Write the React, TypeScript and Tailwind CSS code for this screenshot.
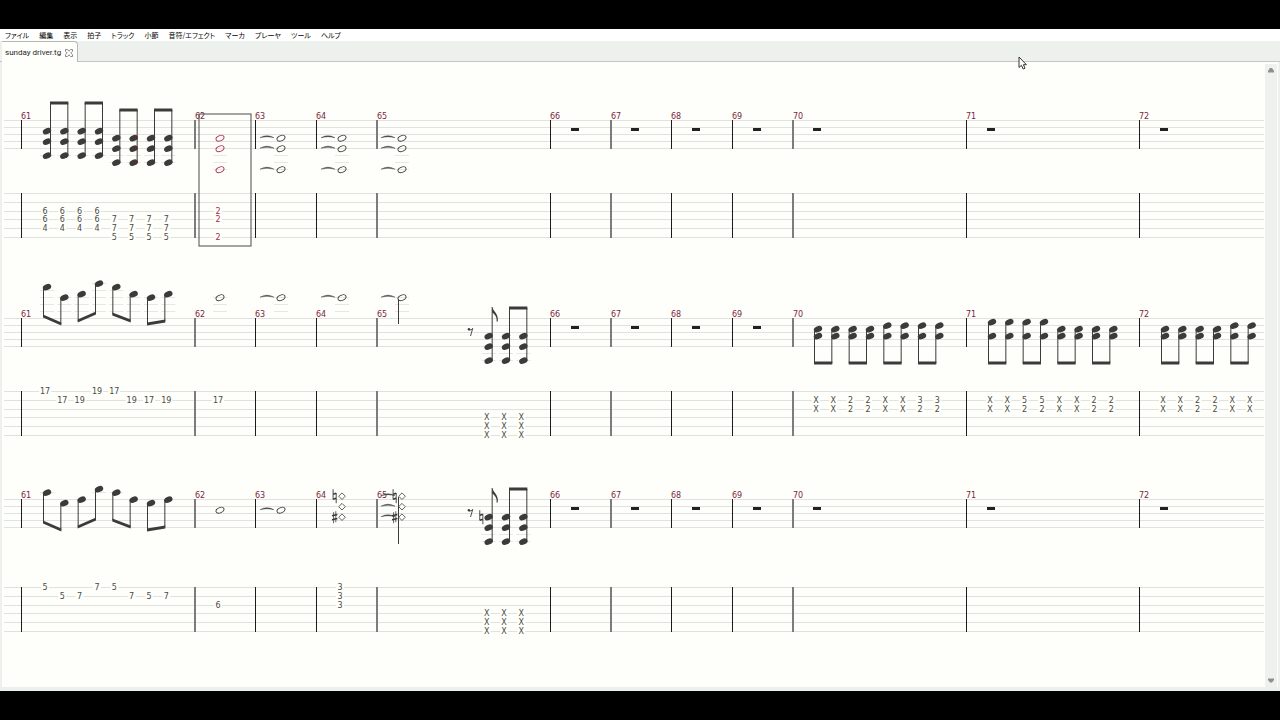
import React from 'react';

type HeadKind = 'filled' | 'open' | 'diamond';
type Accidental = 'natural' | 'sharp';

type Beat = {
  slot: number;
  steps: number[]; // half line steps counted down from the top staff line
  frets?: [number, string][];
  kind?: HeadKind;
  tied?: boolean;
  accidentals?: Record<number, Accidental>;
  color?: string;
  playing?: boolean;
  stem?: [number, number, 'up' | 'down'];
};

type Beam = { slots: [number, number]; y: [number, number]; dir: 'up' | 'down' };

type Measure = {
  beats?: Beat[];
  beams?: Beam[];
  flag?: [number, number];
  eighthRest?: number;
};

type TrackData = { name: string; height: number; tabTop: number; measures: Record<number, Measure> };

const MENU_ITEMS = [
  'ファイル',
  '編集',
  '表示',
  '拍子',
  'トラック',
  '小節',
  '音符/エフェクト',
  'マーカ',
  'プレーヤ',
  'ツール',
  'ヘルプ',
];

const BARS = [
  { number: 61, x: 17, w: 1 },
  { number: 62, x: 190, w: 2 },
  { number: 63, x: 251, w: 1 },
  { number: 64, x: 312, w: 1 },
  { number: 65, x: 372, w: 2 },
  { number: 66, x: 546, w: 1 },
  { number: 67, x: 606, w: 2 },
  { number: 68, x: 667, w: 1 },
  { number: 69, x: 728, w: 1 },
  { number: 70, x: 788, w: 2 },
  { number: 71, x: 962, w: 1 },
  { number: 72, x: 1135, w: 1 },
];

const STAFF_TOP = 57;
const INK = '#3b3b39';
const RED = '#ab2850';
const LINE = '#dfe2de';
const PAPER = '#fefefb';

const slotX = (slot: number) => 26 + (slot * 52) / 3;
const stepY = (step: number) => STAFF_TOP + 1 + step * 3.5;
const stemX = (slot: number, dir: 'up' | 'down') => slotX(slot) + (dir === 'up' ? 3.5 : -3.5);

const filledBeats = (steps: number[][], frets: [number, string][][], start = 0): Beat[] =>
  steps.map((s, i) => ({ slot: i + start, steps: s, frets: frets[i] }));

const high: number[] = [3, 6, 10];
const low: number[] = [5, 8, 12];

const deadChord: [number, string][] = [
  [3, 'X'],
  [4, 'X'],
  [5, 'X'],
];

const pairBeams = (count: number): Beam[] =>
  Array.from({ length: count }, (_, i) => ({ slots: [i * 2, i * 2 + 1], y: [102, 102], dir: 'down' }));

const strum = (tops: number[], frets: string[]): Measure => ({
  beats: tops.map((top, i) => ({
    slot: i,
    steps: [top, 5],
    frets: [
      [1, frets[i]],
      [2, frets[i] === 'X' ? 'X' : '2'],
    ],
  })),
  beams: pairBeams(Math.ceil(tops.length / 2)),
});

const single = (string: number, fret: string): [number, string][] => [[string, fret]];

const TRACKS: TrackData[] = [
  {
    name: 'Track 1',
    height: 198,
    tabTop: 130,
    measures: {
      61: {
        beats: [0, 1, 2, 3, 4, 5, 6, 7].map((slot) => ({
          slot,
          steps: slot < 4 ? high : low,
          playing: slot === 5,
          frets: (slot < 4
            ? [
                [2, '6'],
                [3, '6'],
                [4, '4'],
              ]
            : [
                [3, '7'],
                [4, '7'],
                [5, '5'],
              ]) as [number, string][],
        })),
        beams: [
          { slots: [0, 1], y: [40, 40], dir: 'up' },
          { slots: [2, 3], y: [40, 40], dir: 'up' },
          { slots: [4, 5], y: [47, 47], dir: 'up' },
          { slots: [6, 7], y: [47, 47], dir: 'up' },
        ],
      },
      62: {
        beats: [
          {
            slot: 0,
            steps: [5, 8, 14],
            kind: 'open',
            color: RED,
            frets: [
              [2, '2'],
              [3, '2'],
              [5, '2'],
            ],
          },
        ],
      },
      63: { beats: [{ slot: 0, steps: [5, 8, 14], kind: 'open', tied: true }] },
      64: { beats: [{ slot: 0, steps: [5, 8, 14], kind: 'open', tied: true }] },
      65: { beats: [{ slot: 0, steps: [5, 8, 14], kind: 'open', tied: true }] },
    },
  },
  {
    name: 'Track 2',
    height: 181,
    tabTop: 130,
    measures: {
      61: {
        beats: filledBeats(
          [[-9], [-6], [-7], [-10], [-9], [-7], [-6], [-7]],
          [
            single(0, '17'),
            single(1, '17'),
            single(1, '19'),
            single(0, '19'),
            single(0, '17'),
            single(1, '19'),
            single(1, '17'),
            single(1, '19'),
          ]
        ),
        beams: [
          { slots: [0, 1], y: [55, 63], dir: 'down' },
          { slots: [2, 3], y: [60, 52], dir: 'down' },
          { slots: [4, 5], y: [53, 60], dir: 'down' },
          { slots: [6, 7], y: [63, 60], dir: 'down' },
        ],
      },
      62: { beats: [{ slot: 0, steps: [-6], kind: 'open', frets: single(1, '17') }] },
      63: { beats: [{ slot: 0, steps: [-6], kind: 'open', tied: true }] },
      64: { beats: [{ slot: 0, steps: [-6], kind: 'open', tied: true }] },
      65: {
        beats: [
          { slot: 0, steps: [-6], kind: 'open', tied: true, stem: [38, 63, 'down'] },
          ...filledBeats([low, low, low], [deadChord, deadChord, deadChord], 5),
        ],
        eighthRest: 4,
        flag: [5, 46],
        beams: [{ slots: [6, 7], y: [47, 47], dir: 'up' }],
      },
      70: strum([3, 3, 3, 3, 2, 2, 2, 2], ['X', 'X', '2', '2', 'X', 'X', '3', '3']),
      71: strum([1, 1, 1, 1, 3, 3, 3, 3], ['X', 'X', '5', '5', 'X', 'X', '2', '2']),
      72: strum([3, 3, 3, 3, 2, 2], ['X', 'X', '2', '2', 'X', 'X']),
    },
  },
  {
    name: 'Track 3',
    height: 202,
    tabTop: 145,
    measures: {
      61: {
        beats: filledBeats(
          [[-2], [1], [0], [-3], [-2], [0], [1], [0]],
          [
            single(0, '5'),
            single(1, '5'),
            single(1, '7'),
            single(0, '7'),
            single(0, '5'),
            single(1, '7'),
            single(1, '5'),
            single(1, '7'),
          ]
        ),
        beams: [
          { slots: [0, 1], y: [80, 88], dir: 'down' },
          { slots: [2, 3], y: [85, 77], dir: 'down' },
          { slots: [4, 5], y: [78, 85], dir: 'down' },
          { slots: [6, 7], y: [88, 85], dir: 'down' },
        ],
      },
      62: { beats: [{ slot: 0, steps: [3], kind: 'open', frets: single(2, '6') }] },
      63: { beats: [{ slot: 0, steps: [3], kind: 'open', tied: true }] },
      64: {
        beats: [
          {
            slot: 0,
            steps: [-1, 2, 5],
            kind: 'diamond',
            accidentals: { [-1]: 'natural', 5: 'sharp' },
            frets: [
              [0, '3'],
              [1, '3'],
              [2, '3'],
            ],
          },
        ],
      },
      65: {
        beats: [
          {
            slot: 0,
            steps: [-1, 2, 5],
            kind: 'diamond',
            tied: true,
            accidentals: { [-1]: 'natural', 5: 'sharp' },
            stem: [55, 102, 'down'],
          },
          { slot: 5, steps: low, frets: deadChord, accidentals: { 5: 'natural' } },
          ...filledBeats([low, low], [deadChord, deadChord], 6),
        ],
        eighthRest: 4,
        flag: [5, 46],
        beams: [{ slots: [6, 7], y: [47, 47], dir: 'up' }],
      },
    },
  },
];

const tabLineY = (tabTop: number, i: number) => tabTop + Math.round(i * 8.75);

const ledgerSteps = (steps: number[]) => {
  const result: number[] = [];
  for (let s = 10; s <= Math.max(...steps); s += 2) result.push(s);
  for (let s = -2; s >= Math.min(...steps); s -= 2) result.push(s);
  return result;
};

const NoteHead = ({ x, y, kind, color }: { x: number; y: number; kind: HeadKind; color: string }) => {
  if (kind === 'diamond') {
    return (
      <path d={`M${x - 3.3} ${y}L${x} ${y - 3.3}L${x + 3.3} ${y}L${x} ${y + 3.3}Z`} fill={PAPER} stroke={color} strokeWidth="0.8" />
    );
  }
  const open = kind === 'open';
  return (
    <ellipse
      cx={x}
      cy={y}
      rx={open ? 4.2 : 4.4}
      ry={open ? 2.6 : 2.9}
      transform={`rotate(-24 ${x} ${y})`}
      fill={open ? 'none' : color}
      stroke={open ? color : 'none'}
      strokeWidth="0.9"
    />
  );
};

const AccidentalSign = ({ x, y, type }: { x: number; y: number; type: Accidental }) =>
  type === 'natural' ? (
    <g stroke={INK} fill="none">
      <path d={`M${x - 1.5} ${y - 7}V${y + 3.2}M${x + 1.6} ${y - 3.2}V${y + 7}`} strokeWidth="0.9" />
      <path d={`M${x - 1.5} ${y - 2}L${x + 1.6} ${y - 3}M${x - 1.5} ${y + 3}L${x + 1.6} ${y + 2}`} strokeWidth="1.6" />
    </g>
  ) : (
    <g stroke={INK} fill="none">
      <path d={`M${x - 1} ${y - 5}V${y + 6}M${x + 1.2} ${y - 6}V${y + 5}`} strokeWidth="0.8" />
      <path d={`M${x - 2.6} ${y - 1.4}L${x + 2.8} ${y - 2.6}M${x - 2.6} ${y + 2.6}L${x + 2.8} ${y + 1.4}`} strokeWidth="1.5" />
    </g>
  );

const BeatView = ({ beat, tabTop }: { beat: Beat; tabTop: number }) => {
  const x = slotX(beat.slot);
  const color = beat.color ?? INK;
  return (
    <g>
      {ledgerSteps(beat.steps).map((s) => (
        <rect key={s} x={x - 7} y={Math.floor(stepY(s) - 1)} width="14" height="1" fill="#e6e8e4" />
      ))}
      {beat.stem && (
        <path d={`M${stemX(beat.slot, beat.stem[2])} ${beat.stem[0]}V${beat.stem[1]}`} stroke={INK} strokeWidth="1" />
      )}
      {beat.steps.map((s) => {
        const y = stepY(s) - 0.3;
        const sign = beat.accidentals?.[s];
        return (
          <g key={s}>
            <NoteHead x={x} y={y} kind={beat.kind ?? 'filled'} color={color} />
            {beat.playing && <circle cx={x + 2} cy={y - 1} r="1.6" fill="#6b2c22" />}
            {beat.tied && (
              <path d={`M${x - 21} ${y - 0.5}Q${x - 14} ${y - 4.5} ${x - 7} ${y - 0.5}Q${x - 14} ${y - 2.5} ${x - 21} ${y - 0.5}Z`} fill={INK} stroke={INK} strokeWidth="0.4" />
            )}
            {sign && <AccidentalSign x={x - 7.4} y={y} type={sign} />}
          </g>
        );
      })}
      {beat.frets?.map(([string, fret]) => {
        const y = tabLineY(tabTop, string);
        const half = fret.length > 1 ? 6 : 4;
        return (
          <g key={string}>
            <rect x={x - 2 - half} y={y} width={half * 2} height="1" fill={PAPER} />
            <text x={x - 2} y={y + 3} textAnchor="middle" fill={beat.color ?? '#4a4b45'}>
              {fret}
            </text>
          </g>
        );
      })}
    </g>
  );
};

const BeamView = ({ beam, beats }: { beam: Beam; beats: Beat[] }) => {
  const [a, b] = beam.slots.map((slot) => stemX(slot, beam.dir));
  return (
    <g>
      {beam.slots.map((slot, i) => {
        const steps = beats.find((beat) => beat.slot === slot)?.steps ?? [0];
        const edge = beam.dir === 'up' ? Math.max(...steps) : Math.min(...steps);
        return (
          <path key={slot} d={`M${stemX(slot, beam.dir)} ${beam.y[i]}V${stepY(edge)}`} stroke={INK} strokeWidth="1" />
        );
      })}
      <path
        d={`M${a - 0.5} ${beam.y[0] - 1.5}L${b + 0.5} ${beam.y[1] - 1.5}V${beam.y[1] + 1.5}L${a - 0.5} ${beam.y[0] + 1.5}Z`}
        fill={INK}
      />
    </g>
  );
};

const MeasureView = ({ measure, x, tabTop }: { measure?: Measure; x: number; tabTop: number }) => {
  if (!measure) {
    return null;
  }
  const { beats = [], beams = [], flag, eighthRest } = measure;
  return (
    <g transform={`translate(${x} 0)`}>
      {beats.map((beat) => (
        <BeatView key={beat.slot} beat={beat} tabTop={tabTop} />
      ))}
      {beams.map((beam) => (
        <BeamView key={beam.slots[0]} beam={beam} beats={beats} />
      ))}
      {flag && (
        <g transform={`translate(${stemX(flag[0], 'up')} ${flag[1]})`}>
          <path d={`M0 0V${stepY(12) - flag[1]}`} stroke={INK} strokeWidth="1" />
          <path d="M0 0C0.6 4 6.8 6.5 5.6 14.5L4.4 14.5C5.2 9.5 2 7 0 5.5Z" fill={INK} />
        </g>
      )}
      {eighthRest !== undefined && (
        <g transform={`translate(${slotX(eighthRest) - 1} 67)`}>
          <circle cx="-1.4" cy="1.2" r="1.2" fill={INK} />
          <path d="M-1.6 1.8Q1 2.6 2.4 0.4L0.2 8" fill="none" stroke={INK} strokeWidth="0.9" />
        </g>
      )}
    </g>
  );
};

const TrackScore = ({ track, selected }: { track: TrackData; selected?: boolean }) => {
  const { tabTop, measures } = track;
  return (
    <svg
      role="img"
      aria-label={track.name}
      className="block w-full shrink-0 overflow-hidden font-['DejaVu_Sans',sans-serif] text-[8px] leading-none"
      height={track.height}
    >
      {[0, 1, 2, 3, 4].map((i) => (
        <rect key={i} x="0" y={STAFF_TOP + i * 7} width="100%" height="1" fill={LINE} />
      ))}
      {[0, 1, 2, 3, 4, 5].map((i) => (
        <rect key={i} x="0" y={tabLineY(tabTop, i)} width="100%" height="1" fill={LINE} />
      ))}
      {BARS.map(({ number, x, w }) => (
        <g key={number}>
          <g fill={w === 1 ? '#1c1c1c' : '#7c7c7c'}>
            <rect x={x} y={STAFF_TOP} width={w} height="29" />
            <rect x={x} y={tabTop} width={w} height="45" />
          </g>
          <text x={x + w - 1} y={STAFF_TOP - 1} fill="#7b1f3c">
            {number}
          </text>
          {!measures[number] && <rect x={x + 21} y="65" width="8" height="3" fill="#222222" />}
          <MeasureView measure={measures[number]} x={x} tabTop={tabTop} />
        </g>
      ))}
      {selected && <rect x="195" y="51" width="52" height="132" fill="none" stroke="#4a4a48" strokeWidth="1" />}
    </svg>
  );
};

const MenuBar = () => (
  <nav className="flex h-3 items-center gap-2.5 bg-white pl-[5px] font-['Noto_Sans_CJK_JP',sans-serif] text-[7px] leading-3 text-black">
    {MENU_ITEMS.map((item) => (
      <button key={item} type="button" className="whitespace-nowrap [font-feature-settings:'palt']">
        {item}
      </button>
    ))}
  </nav>
);

const TabBar = () => (
  <div className="flex h-[21px] items-stretch border-b border-[#c3c8c5] bg-[#edf1ee] pl-0.5">
    <div className="-mb-px flex items-center gap-1 rounded-tr-sm border-t border-r border-[#b4b8b5] bg-[#fefefb] pt-px pr-1 pl-[3px]">
      <span className="font-['Roboto',sans-serif] text-[8px] leading-3 whitespace-nowrap text-[#1f1f1f]">sunday driver.tg</span>
      <button type="button" aria-label="Close tab">
        <svg width="8" height="8" viewBox="0 0 8 8" fill="none" stroke="#6f6f6f" strokeWidth="0.8">
          <path d="M0.5 0.5H2.5L4 2.2L5.5 0.5H7.5V2.3L5.8 4L7.5 5.7V7.5H5.5L4 5.8L2.5 7.5H0.5V5.7L2.2 4L0.5 2.3Z" />
        </svg>
      </button>
    </div>
  </div>
);

const ScrollBar = () => (
  <div className="flex w-3 shrink-0 flex-col items-center justify-between bg-[#edf2ee] py-1">
    <button type="button" aria-label="Scroll up">
      <svg width="6" height="5" viewBox="0 0 6 5" className="block">
        <path d="M2 0H4L6 3V4.5H0V3Z" fill="#8d918e" />
      </svg>
    </button>
    <button type="button" aria-label="Scroll down">
      <svg width="6" height="5" viewBox="0 0 6 5" className="block">
        <path d="M0 0.5H6V2L4 4.5H2L0 2Z" fill="#8d918e" />
      </svg>
    </button>
  </div>
);

const App = () => (
  <div className="relative flex h-screen flex-col overflow-hidden bg-black py-[29px]">
    <MenuBar />
    <TabBar />
    <div className="flex min-h-0 flex-1 border-x-2 border-b-4 border-[#edf1ee] bg-[#fefefb]">
      <main className="min-w-0 flex-1 overflow-hidden pt-px pr-px pl-0.5">
        {TRACKS.map((track, i) => (
          <TrackScore key={track.name} track={track} selected={i === 0} />
        ))}
      </main>
      <div className="flex pt-0.5 pr-px">
        <ScrollBar />
      </div>
    </div>
    <svg className="pointer-events-none absolute top-[56px] left-[1018px]" width="10" height="15" viewBox="0 0 10 15">
      <path d="M1 1V11.5L3.4 9.3L5.2 13L7 12.2L5.4 8.7H8.4Z" fill="#ffffff" stroke="#333333" strokeWidth="1" />
    </svg>
  </div>
);

export default App;
